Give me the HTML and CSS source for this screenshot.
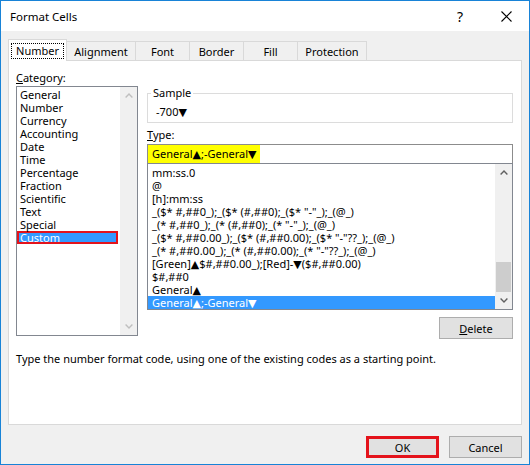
FILE: index.html
```html
<!DOCTYPE html>
<html>
<head>
<meta charset="utf-8">
<link rel="stylesheet" href="styles.css">
</head>
<body>
<div class="window">
  <div class="titlebar">
    <span class="title">Format Cells</span>
    <span class="tb-btn help">?</span>
    <span class="tb-btn close"><svg width="11" height="11" viewBox="0 0 11 11"><path d="M0.5 0.5 L10.5 10.5 M10.5 0.5 L0.5 10.5" stroke="#000" stroke-width="1.1" fill="none"/></svg></span>
  </div>
  <div class="content">
    <div class="tabs">
      <div class="tab active w-number"><span class="focus">Number</span></div>
      <div class="tab w-wide">Alignment</div>
      <div class="tab w-narrow">Font</div>
      <div class="tab w-narrow">Border</div>
      <div class="tab w-narrow">Fill</div>
      <div class="tab w-wide">Protection</div>
    </div>
    <div class="panel">
      <div class="cols">
        <div class="left">
          <div class="label"><u>C</u>ategory:</div>
          <div class="listbox cat">
            <div class="items">
              <div class="row">General</div>
              <div class="row">Number</div>
              <div class="row">Currency</div>
              <div class="row">Accounting</div>
              <div class="row">Date</div>
              <div class="row">Time</div>
              <div class="row">Percentage</div>
              <div class="row">Fraction</div>
              <div class="row">Scientific</div>
              <div class="row">Text</div>
              <div class="row">Special</div>
              <div class="row sel sel-cat">Custom</div>
            </div>
            <div class="scrollbar disabled">
              <div class="arrow"><svg width="8" height="5" viewBox="0 0 8 5"><path d="M0.6 4.4 L4 1 L7.4 4.4" stroke="currentColor" stroke-width="1.4" fill="none"/></svg></div>
              <div class="track"></div>
              <div class="arrow"><svg width="8" height="5" viewBox="0 0 8 5"><path d="M0.6 0.6 L4 4 L7.4 0.6" stroke="currentColor" stroke-width="1.4" fill="none"/></svg></div>
            </div>
          </div>
        </div>
        <div class="right">
          <fieldset class="sample">
            <legend>Sample</legend>
            <div class="sample-value">-700▼</div>
          </fieldset>
          <div class="label type-label"><u>T</u>ype:</div>
          <div class="type-input"><span class="hl">General▲;-General▼</span></div>
          <div class="listbox fmt">
            <div class="items">
              <div class="row">mm:ss.0</div>
              <div class="row">@</div>
              <div class="row">[h]:mm:ss</div>
              <div class="row">_($* #,##0_);_($* (#,##0);_($* "-"_);_(@_)</div>
              <div class="row">_(* #,##0_);_(* (#,##0);_(* "-"_);_(@_)</div>
              <div class="row">_($* #,##0.00_);_($* (#,##0.00);_($* "-"??_);_(@_)</div>
              <div class="row">_(* #,##0.00_);_(* (#,##0.00);_(* "-"??_);_(@_)</div>
              <div class="row">[Green]▲$#,##0.00_);[Red]-▼($#,##0.00)</div>
              <div class="row">$#,##0</div>
              <div class="row">General▲</div>
              <div class="row sel">General▲;-General▼</div>
            </div>
            <div class="scrollbar">
              <div class="arrow"><svg width="8" height="5" viewBox="0 0 8 5"><path d="M0.6 4.4 L4 1 L7.4 4.4" stroke="currentColor" stroke-width="1.4" fill="none"/></svg></div>
              <div class="track"><div class="thumb"></div></div>
              <div class="arrow"><svg width="8" height="5" viewBox="0 0 8 5"><path d="M0.6 0.6 L4 4 L7.4 0.6" stroke="currentColor" stroke-width="1.4" fill="none"/></svg></div>
            </div>
          </div>
          <div class="delete-row"><button class="btn delete"><u>D</u>elete</button></div>
        </div>
      </div>
      <p class="desc">Type the number format code, using one of the existing codes as a starting point.</p>
    </div>
    <div class="footer">
      <button class="btn ok">OK</button>
      <button class="btn cancel">Cancel</button>
    </div>
  </div>
</div>
</body>
</html>
```

FILE: styles.css
```css
* { box-sizing: border-box; }
html, body { margin: 0; padding: 0; background: #ffffff; }
body {
  font-family: "Noto Sans", "DejaVu Sans", sans-serif;
  font-size: 11px;
  color: #000;
}
.window {
  width: 530px;
  height: 465px;
  border: 1px solid #1883d7;
  background: #f0f0f0;
  display: flex;
  flex-direction: column;
}
.titlebar {
  height: 30px;
  background: #fff;
  display: flex;
  align-items: center;
  padding-left: 9px;
}
.title { flex: 1; font-size: 11.5px; }
.tb-btn {
  width: 46px;
  height: 30px;
  display: flex;
  align-items: center;
  justify-content: center;
}
.help { font-size: 14px; }
.close svg { display: block; }
.content {
  flex: 1;
  padding: 8px 7px 0 7px;
  display: flex;
  flex-direction: column;
}
.tabs {
  display: flex;
  align-items: flex-end;
  height: 21px;
  position: relative;
  z-index: 1;
}
.tab {
  height: 19px;
  border: 1px solid #d9d9d9;
  border-bottom: none;
  background: #f0f0f0;
  margin-left: -1px;
  display: flex;
  justify-content: center;
  align-items: center;
  padding-top: 1px;
}
.tab.active {
  height: 22px;
  margin-left: 0;
  margin-bottom: -1px;
  background: #fff;
  align-items: flex-start;
  padding-top: 3px;
  position: relative;
  z-index: 2;
}
.w-number { width: 59px; }
.w-wide { width: 70px; }
.w-narrow { width: 55px; }
.focus {
  display: block;
  border: 1px dotted #000;
  width: 53px;
  height: 16px;
  line-height: 14px;
  text-align: center;
}
.panel {
  height: 365px;
  border: 1px solid #d9d9d9;
  background: #fff;
  padding: 9px 7px 0 7px;
}
.cols {
  display: grid;
  grid-template-columns: 122px 366px;
  column-gap: 9px;
  align-items: start;
}
.label { line-height: 16px; height: 16px; }
.listbox {
  border: 1px solid #828790;
  background: #fff;
  display: flex;
  overflow: hidden;
}
.listbox .items { flex: 1; overflow: hidden; white-space: nowrap; }
.row { height: 13px; line-height: 13px; }
.cat { height: 250px; }
.cat .items { padding-top: 1px; }
.cat .row { padding-left: 3px; }
.sel { background: #3399ff; color: #fff; }
.sel-cat {
  box-shadow: inset 0 0 0 2px #e4131b;
  width: 101px;
}
.scrollbar {
  width: 17px;
  background: #f0f0f0;
  display: flex;
  flex-direction: column;
  color: #606060;
}
.scrollbar.disabled { color: #bfbfbf; }
.arrow {
  height: 17px;
  display: flex;
  align-items: center;
  justify-content: center;
}
.arrow svg { display: block; }
.track { flex: 1; display: flex; flex-direction: column; justify-content: flex-end; }
.thumb { height: 30px; margin: 0 1px; background: #cdcdcd; }
.sample {
  margin: 15px 0 0 0;
  padding: 3px 8px 3px 8px;
  border: 1px solid #dcdcdc;
  min-width: 0;
}
.sample legend {
  padding: 0 2px;
  margin-left: -5px;
  line-height: 16px;
}
.sample-value { line-height: 15px; height: 15px; }
.type-label { margin-top: 4px; }
.type-input {
  margin-top: 1px;
  height: 20px;
  border: 1px solid #8c8c8c;
  background: #fff;
}
.hl {
  display: inline-block;
  height: 18px;
  line-height: 18px;
  padding: 0 3px 0 4px;
  background: #ffff00;
}
.fmt { height: 147px; margin-top: -1px; }
.fmt .items { padding-top: 2px; }
.fmt .row { padding-left: 4px; }
.delete-row { display: flex; justify-content: flex-end; margin-top: 7px; }
.btn {
  font-family: inherit;
  font-size: 11px;
  color: #000;
  background: #e1e1e1;
  border: 1px solid #adadad;
  padding: 0;
  height: 22px;
}
.delete { width: 74px; }
.desc { margin: 12px 0 0 0; line-height: 16px; }
.footer {
  display: flex;
  justify-content: flex-end;
  gap: 10px;
  margin-top: 11px;
}
.ok { width: 73px; border: 3px solid #e4131b; }
.cancel { width: 73px; }
```
